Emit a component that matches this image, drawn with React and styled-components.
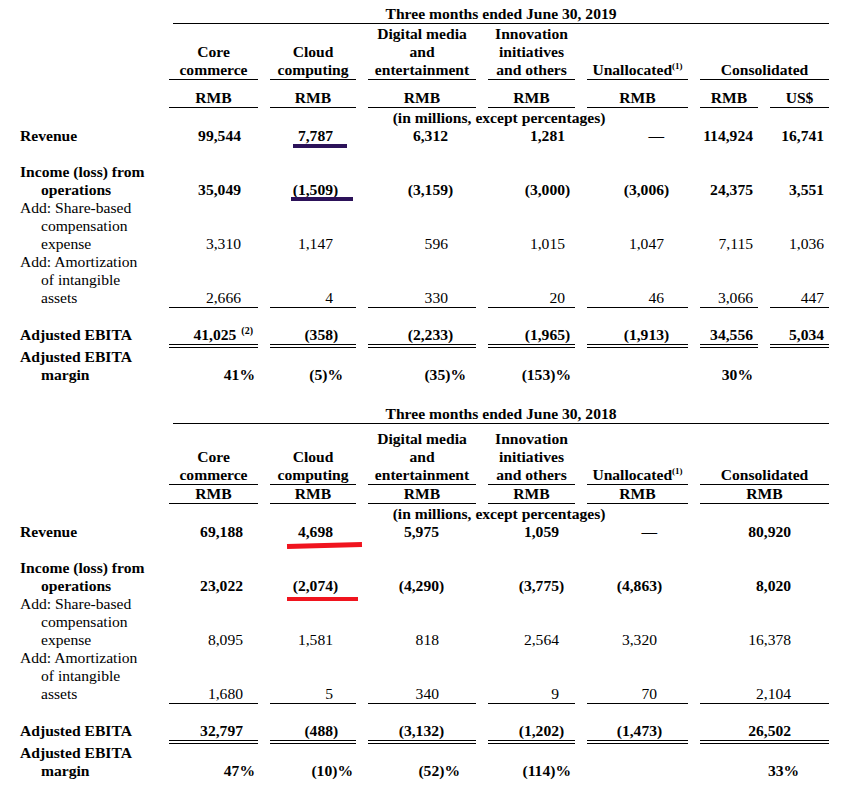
import React from "react";
import styled, { createGlobalStyle } from "styled-components";

const GlobalStyle = createGlobalStyle`
  html, body {
    margin: 0;
    padding: 0;
    background: #fff;
  }
  body {
    font-family: "Liberation Serif", "Times New Roman", serif;
    color: #000;
  }
`;

const Page = styled.div`
  padding: 5px 0 0 8px;
`;

const Table = styled.table`
  border-collapse: separate;
  border-spacing: 12px 0;
  table-layout: fixed;
  width: 833px;
  font-size: 15.6px;
  line-height: 18px;
  margin-top: ${(p) => p.$gap || 0}px;
`;

const Col = styled.col`
  width: ${(p) => p.$w}px;
`;

const Blank = styled.td`
  padding: 0;
`;

const TitleCell = styled.td`
  padding: 0;
  vertical-align: bottom;
`;

const TitleText = styled.div`
  margin-left: 4px;
  text-align: center;
  font-weight: 700;
  border-bottom: 1px solid #000;
  white-space: nowrap;
`;

const HeadCell = styled.th`
  padding: ${(p) => p.$top || 0}px 0 0 0;
  font-weight: 700;
  text-align: center;
  vertical-align: bottom;
  white-space: nowrap;
  border-bottom: 1px solid #000;
`;

const UnitNote = styled.td`
  padding: ${(p) => p.$top || 0}px 0 0 0;
  text-align: center;
  font-weight: 700;
  white-space: nowrap;
`;

const rules = {
  single: "1px solid",
  double: "4px double",
};

const LabelCell = styled.td`
  padding: ${(p) => p.$top || 0}px 0 0 0;
  vertical-align: bottom;
  white-space: nowrap;
  font-weight: ${(p) => (p.$bold ? 700 : 400)};
  border-bottom: ${(p) => (rules[p.$rule] ? `${rules[p.$rule]} transparent` : "none")};
`;

const LabelLine = styled.div`
  padding-left: ${(p) => (p.$indent ? 21 : 0)}px;
`;

const ValueCell = styled.td`
  position: relative;
  padding: ${(p) => p.$top || 0}px ${(p) => p.$pad}px 0 0;
  text-align: right;
  vertical-align: bottom;
  white-space: nowrap;
  font-weight: ${(p) => (p.$bold ? 700 : 400)};
  border-bottom: ${(p) => (rules[p.$rule] ? `${rules[p.$rule]} #000` : "none")};
`;

const Hang = styled.span`
  margin-right: -0.333em;
`;

const Note = styled.sup`
  font-size: ${(p) => p.$size || 9}px;
  line-height: 0;
  vertical-align: 6px;
  margin-left: ${(p) => p.$gap || 0}px;
  margin-right: ${(p) => p.$hang || 0}px;
`;

const Mark = styled.span`
  position: absolute;
  left: ${(p) => p.$left}px;
  width: ${(p) => p.$width}px;
  bottom: ${(p) => p.$bottom}px;
  height: ${(p) => p.$height}px;
  background: ${(p) => p.$color};
  transform: rotate(${(p) => p.$tilt || 0}deg);
`;

const PURPLE = "#2c1259";
const RED = "#f0141e";

const widths = [137, 89, 86, 108, 87, 101, 58, 59];

const segments = [
  { lines: ["Core", "commerce"] },
  { lines: ["Cloud", "computing"] },
  { lines: ["Digital media", "and", "entertainment"] },
  { lines: ["Innovation", "initiatives", "and others"] },
  { lines: ["Unallocated"], note: "(1)" },
  { lines: ["Consolidated"], span: 2 },
];

const tables = [
  {
    title: "Three months ended June 30, 2019",
    headTop: 1,
    unitTop: 9,
    incomeGap: 18,
    units: [
      { text: "RMB" },
      { text: "RMB" },
      { text: "RMB" },
      { text: "RMB" },
      { text: "RMB" },
      { text: "RMB" },
      { text: "US$" },
    ],
    pads: [17, 23, 28, 10, 24, 5, 5],
    spans: [1, 1, 1, 1, 1, 1, 1],
    marginPads: [3, 13, 10, 4, 0, 5, 0],
    revenue: ["99,544", "7,787", "6,312", "1,281", "—", "114,924", "16,741"],
    income: ["35,049", "(1,509)", "(3,159)", "(3,000)", "(3,006)", "24,375", "3,551"],
    share: ["3,310", "1,147", "596", "1,015", "1,047", "7,115", "1,036"],
    amort: ["2,666", "4", "330", "20", "46", "3,066", "447"],
    ebita: ["41,025", "(358)", "(2,233)", "(1,965)", "(1,913)", "34,556", "5,034"],
    margin: ["41%", "(5)%", "(35)%", "(153)%", "", "30%", ""],
    ebitaNote: { col: 0, text: "(2)" },
    revenueMark: { col: 1, color: PURPLE, left: 23, width: 54, bottom: -3, height: 4 },
    incomeMark: { col: 1, color: PURPLE, left: 21, width: 62, bottom: -2, height: 4 },
  },
  {
    title: "Three months ended June 30, 2018",
    headTop: 6,
    unitTop: 0,
    incomeGap: 18,
    units: [
      { text: "RMB" },
      { text: "RMB" },
      { text: "RMB" },
      { text: "RMB" },
      { text: "RMB" },
      { text: "RMB", span: 2 },
    ],
    pads: [15, 23, 37, 16, 31, 38],
    spans: [1, 1, 1, 1, 1, 2],
    marginPads: [3, 3, 16, 4, 0, 30],
    revenue: ["69,188", "4,698", "5,975", "1,059", "—", "80,920"],
    income: ["23,022", "(2,074)", "(4,290)", "(3,775)", "(4,863)", "8,020"],
    share: ["8,095", "1,581", "818", "2,564", "3,320", "16,378"],
    amort: ["1,680", "5", "340", "9", "70", "2,104"],
    ebita: ["32,797", "(488)", "(3,132)", "(1,202)", "(1,473)", "26,502"],
    margin: ["47%", "(10)%", "(52)%", "(114)%", "", "33%"],
    revenueMark: { col: 1, color: RED, left: 17, width: 75, bottom: -7, height: 5, tilt: -1.5 },
    incomeMark: { col: 1, color: RED, left: 17, width: 71, bottom: -6, height: 4 },
  },
];

const Amount = ({ text, percent }) => {
  if (!percent && text.endsWith(")")) {
    return (
      <>
        {text.slice(0, -1)}
        <Hang>)</Hang>
      </>
    );
  }
  return text;
};

const Label = ({ lines, bold, top, rule }) => (
  <LabelCell $bold={bold} $top={top} $rule={rule}>
    {lines.map((line, i) => (
      <LabelLine key={line} $indent={i > 0}>
        {line}
      </LabelLine>
    ))}
  </LabelCell>
);

const DataRow = ({ table, label, values, bold, top, rule, percent, mark, note }) => (
  <tr>
    <Label lines={label} bold={bold} top={top} rule={rule} />
    {values.map((v, i) => (
      <ValueCell
        key={i}
        colSpan={table.spans[i]}
        $bold={bold}
        $top={top}
        $pad={percent ? table.marginPads[i] : table.pads[i]}
        $rule={v ? rule : undefined}
      >
        <Amount text={v} percent={percent} />
        {note && note.col === i && (
          <Note $size={10} $gap={5} $hang={-12}>
            {note.text}
          </Note>
        )}
        {mark && mark.col === i && (
          <Mark
            $left={mark.left}
            $width={mark.width}
            $bottom={mark.bottom}
            $height={mark.height}
            $color={mark.color}
            $tilt={mark.tilt}
          />
        )}
      </ValueCell>
    ))}
  </tr>
);

const SegmentTable = ({ table, gap }) => (
  <Table $gap={gap}>
    <colgroup>
      {widths.map((w, i) => (
        <Col key={i} $w={w} />
      ))}
    </colgroup>
    <thead>
      <tr>
        <Blank />
        <TitleCell colSpan={7}>
          <TitleText>{table.title}</TitleText>
        </TitleCell>
      </tr>
      <tr>
        <Blank />
        {segments.map((s) => (
          <HeadCell key={s.lines[0]} colSpan={s.span || 1} $top={table.headTop}>
            {s.lines.map((l) => (
              <div key={l}>
                {l}
                {s.note && <Note>{s.note}</Note>}
              </div>
            ))}
          </HeadCell>
        ))}
      </tr>
      <tr>
        <Blank />
        {table.units.map((u, i) => (
          <HeadCell key={i} colSpan={u.span || 1} $top={table.unitTop}>
            {u.text}
          </HeadCell>
        ))}
      </tr>
      <tr>
        <Blank />
        <UnitNote colSpan={7} $top={1}>
          (in millions, except percentages)
        </UnitNote>
      </tr>
    </thead>
    <tbody>
      <DataRow
        table={table}
        label={["Revenue"]}
        values={table.revenue}
        bold
        mark={table.revenueMark}
      />
      <DataRow
        table={table}
        label={["Income (loss) from", "operations"]}
        values={table.income}
        bold
        top={table.incomeGap}
        mark={table.incomeMark}
      />
      <DataRow
        table={table}
        label={["Add: Share-based", "compensation", "expense"]}
        values={table.share}
      />
      <DataRow
        table={table}
        label={["Add: Amortization", "of intangible", "assets"]}
        values={table.amort}
        rule="single"
      />
      <DataRow
        table={table}
        label={["Adjusted EBITA"]}
        values={table.ebita}
        bold
        top={18}
        rule="double"
        note={table.ebitaNote}
      />
      <DataRow
        table={table}
        label={["Adjusted EBITA", "margin"]}
        values={table.margin}
        bold
        percent
      />
    </tbody>
  </Table>
);

export default function App() {
  return (
    <>
      <GlobalStyle />
      <Page>
        <SegmentTable table={tables[0]} />
        <SegmentTable table={tables[1]} gap={21} />
      </Page>
    </>
  );
}
